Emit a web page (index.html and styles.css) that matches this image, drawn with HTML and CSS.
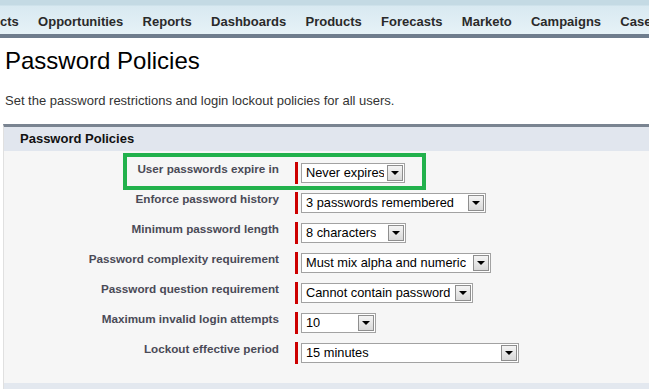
FILE: index.html
```html
<!DOCTYPE html>
<html lang="en">
<head>
    <meta charset="UTF-8">
    <meta name="viewport" content="width=device-width, initial-scale=1.0">
    <title>Password Policies</title>
    <link rel="stylesheet" href="styles.css">
</head>
<body>
    <div class="tabbar">
        <span class="tab">cts</span>
        <span class="tab">Opportunities</span>
        <span class="tab">Reports</span>
        <span class="tab">Dashboards</span>
        <span class="tab">Products</span>
        <span class="tab">Forecasts</span>
        <span class="tab">Marketo</span>
        <span class="tab">Campaigns</span>
        <span class="tab">Cases</span>
    </div>

    <div class="content">
        <h1 class="page-title">Password Policies</h1>
        <p class="page-desc">Set the password restrictions and login lockout policies for all users.</p>

        <div class="panel">
            <div class="panel-head">
                <h3>Password Policies</h3>
            </div>
            <div class="panel-body">
                <div class="field-row">
                    <div class="field-label">User passwords expire in</div>
                    <div class="field-input">
                        <div class="select w-expire"><span class="select-value">Never expires</span><span class="select-arrow"></span></div>
                    </div>
                </div>
                <div class="field-row">
                    <div class="field-label">Enforce password history</div>
                    <div class="field-input">
                        <div class="select w-history"><span class="select-value">3 passwords remembered</span><span class="select-arrow"></span></div>
                    </div>
                </div>
                <div class="field-row">
                    <div class="field-label">Minimum password length</div>
                    <div class="field-input">
                        <div class="select w-length"><span class="select-value">8 characters</span><span class="select-arrow"></span></div>
                    </div>
                </div>
                <div class="field-row">
                    <div class="field-label">Password complexity requirement</div>
                    <div class="field-input">
                        <div class="select w-complexity"><span class="select-value">Must mix alpha and numeric</span><span class="select-arrow"></span></div>
                    </div>
                </div>
                <div class="field-row">
                    <div class="field-label">Password question requirement</div>
                    <div class="field-input">
                        <div class="select w-question"><span class="select-value">Cannot contain password</span><span class="select-arrow"></span></div>
                    </div>
                </div>
                <div class="field-row">
                    <div class="field-label">Maximum invalid login attempts</div>
                    <div class="field-input">
                        <div class="select w-attempts"><span class="select-value">10</span><span class="select-arrow"></span></div>
                    </div>
                </div>
                <div class="field-row">
                    <div class="field-label">Lockout effective period</div>
                    <div class="field-input">
                        <div class="select w-lockout"><span class="select-value">15 minutes</span><span class="select-arrow"></span></div>
                    </div>
                </div>
            </div>
            <div class="panel-foot"></div>

            <!-- annotation box round the first setting -->
            <div class="highlight"></div>
        </div>
    </div>
</body>
</html>
```

FILE: styles.css
```css
body {
    margin: 0;
    padding: 0;
    font-family: "Liberation Sans", Arial, sans-serif;
    background: #fff;
    overflow: hidden;
}

/* top tab bar */
.tabbar {
    display: flex;
    gap: 19.3px;
    height: 20px;
    padding-top: 14px;
    border-bottom: 4px solid #6f7d8d;
    background: linear-gradient(to bottom, #c4dae4 0, #c4dae4 5px, #d8e9f1 6px, #e6f2f7 100%);
    white-space: nowrap;
    overflow: hidden;
}

.tab {
    font-size: 13px;
    line-height: 15px;
    font-weight: bold;
    color: #2a2a2a;
}

.content {
    padding-left: 3px;
}

.page-title {
    margin: 9px 0 0 2px;
    font-size: 24px;
    line-height: 27px;
    font-weight: normal;
    color: #000;
}

.page-desc {
    margin: 19px 0 0 2px;
    font-size: 13px;
    line-height: 15px;
    color: #333;
}

/* settings panel */
.panel {
    position: relative;
    margin-top: 16px;
    border-top: 3px solid #7a8491;
    border-left: 1px solid #e0e0e0;
    background: #f6f6f6;
}

.panel-head {
    padding: 4px 0 5px 16px;
    background: #e1e6ee;
}

.panel-head h3 {
    margin: 0;
    font-size: 13px;
    line-height: 15px;
    font-weight: bold;
    color: #111;
}

.panel-body {
    display: flex;
    flex-direction: column;
    gap: 8px;
    padding: 11px 0 19px 0;
}

.field-row {
    display: grid;
    grid-template-columns: 275px auto;
    column-gap: 16px;
    height: 22px;
}

.field-label {
    text-align: right;
    font-size: 11.7px;
    line-height: 13px;
    font-weight: bold;
    color: #4a4a56;
}

.field-input {
    display: flex;
    align-items: center;
    padding-left: 3px;
    border-left: 3px solid #c00;
}

.select {
    display: flex;
    align-items: center;
    justify-content: space-between;
    gap: 3px;
    box-sizing: border-box;
    height: 20px;
    padding: 0 1px 0 4px;
    border: 1px solid #a2a2a2;
    background: #fff;
}

.select-value {
    min-width: 0;
    overflow: hidden;
    font-size: 12.8px;
    line-height: 18px;
    color: #000;
    white-space: nowrap;
}

.select-arrow {
    position: relative;
    flex: none;
    box-sizing: border-box;
    width: 16px;
    height: 16px;
    border: 1px solid #8e8e8e;
    background: linear-gradient(to bottom, #f4f4f4, #d9d9d9);
}

.select-arrow::after {
    content: "";
    position: absolute;
    left: 3px;
    top: 5px;
    border-left: 4px solid transparent;
    border-right: 4px solid transparent;
    border-top: 4px solid #000;
}

.w-expire { width: 104px; }
.w-history { width: 185px; }
.w-length { width: 105px; }
.w-complexity { width: 190px; }
.w-question { width: 172px; }
.w-attempts { width: 75px; }
.w-lockout { width: 218px; }

.panel-foot {
    height: 8px;
    background: #e3e8ef;
}

.highlight {
    position: absolute;
    left: 119px;
    top: 26px;
    width: 303px;
    height: 37px;
    box-sizing: border-box;
    border: 4px solid #22b14c;
}
```
